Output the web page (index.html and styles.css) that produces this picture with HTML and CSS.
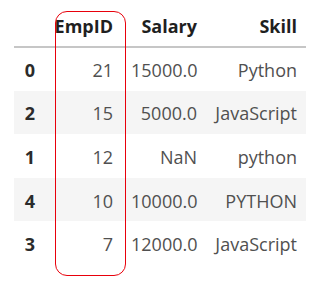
FILE: index.html
```html
<!DOCTYPE html>
<html>
<head>
<meta charset="utf-8">
<link rel="stylesheet" href="styles.css">
</head>
<body>
<div class="frame">
  <table class="df">
    <colgroup>
      <col class="c-idx"><col class="c-emp"><col class="c-sal"><col class="c-skill">
    </colgroup>
    <thead>
      <tr><th></th><th>EmpID</th><th>Salary</th><th>Skill</th></tr>
    </thead>
    <tbody>
      <tr><th>0</th><td>21</td><td>15000.0</td><td>Python</td></tr>
      <tr class="odd"><th>2</th><td>15</td><td>5000.0</td><td>JavaScript</td></tr>
      <tr><th>1</th><td>12</td><td>NaN</td><td>python</td></tr>
      <tr class="odd"><th>4</th><td>10</td><td>10000.0</td><td>PYTHON</td></tr>
      <tr><th>3</th><td>7</td><td>12000.0</td><td>JavaScript</td></tr>
    </tbody>
  </table>
  <div class="highlight"></div>
</div>
</body>
</html>
```
FILE: styles.css
```css
html, body {
  margin: 0;
  padding: 0;
  background: #ffffff;
}
.frame {
  position: relative;
  padding: 4px 14px 0 14px;
  width: 292px;
  height: 281px;
}
.df {
  border-collapse: collapse;
  table-layout: fixed;
  width: 292px;
  font-family: "Open Sans", "Segoe UI", sans-serif;
  font-size: 18px;
  color: #505050;
}
.c-idx { width: 31px; }
.c-emp { width: 77px; }
.c-sal { width: 84px; }
.c-skill { width: 100px; }
.df th, .df td {
  padding: 0 9px;
  text-align: right;
  vertical-align: middle;
  white-space: nowrap;
}
.df thead th {
  height: 43px;
  font-weight: bold;
  color: #1f1f1f;
  border-bottom: 2px solid #c6c6c6;
  vertical-align: middle;
  padding-top: 2px;
  box-sizing: border-box;
}
.df tbody tr {
  height: 43.6px;
}
.df tbody td, .df tbody th {
  padding-top: 2px;
}
.df tbody th {
  font-weight: bold;
  color: #2b2b2b;
  padding-right: 10px;
}
.df tbody tr.odd {
  background: #f5f5f5;
}
.highlight {
  position: absolute;
  left: 55px;
  top: 11px;
  width: 71px;
  height: 265px;
  border: 1.5px solid #e8000b;
  border-radius: 12px;
  box-sizing: border-box;
  pointer-events: none;
}
```
